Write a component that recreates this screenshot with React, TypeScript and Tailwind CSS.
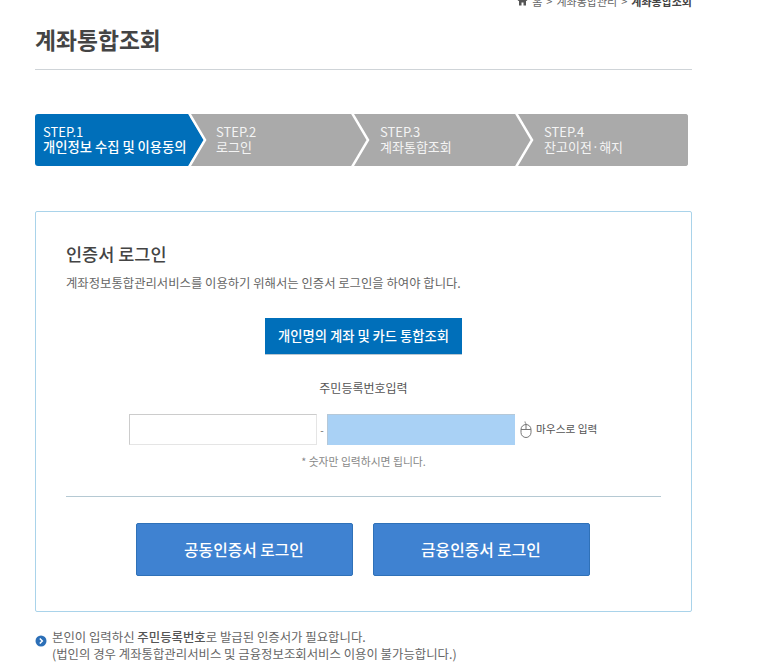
import React from "react";

function Step({ w, pl, title, sub, active }: { w: string; pl: string; title: string; sub: string; active?: boolean }) {
  return (
    <div className={`${w} ${pl} pb-[2px] flex flex-col justify-center text-[13px] leading-[15px] ${active ? "bg-[#006fba] text-white" : "bg-[#aaaaaa] text-[#f4f4f4]"}`}>
      <span>{title}</span>
      <span className={active ? "font-medium text-[13.3px] whitespace-nowrap" : "whitespace-nowrap"}>{sub}</span>
    </div>
  );
}

export default function App() {
  return (
    <div className="w-[765px] h-[663px] overflow-hidden bg-white pl-[35px] font-['Noto_Sans_CJK_KR','Liberation_Sans',sans-serif] text-[#555]">
      <div className="w-[657px]">
        <div className="flex justify-end items-center gap-[4px] -mt-[6px] h-[14px] text-[11px] leading-[14px] text-[#666]">
          <svg width="11" height="10" viewBox="0 0 10 10"><path d="M5 0.5 0 5h1.5v4.5h2.5V6.5h2v3h2.5V5H10z" fill="#555" /></svg>
          <span>홈</span>
          <span>&gt;</span>
          <span>계좌통합관리</span>
          <span>&gt;</span>
          <span className="font-bold text-[#444]">계좌통합조회</span>
        </div>
        <h1 className="mt-[17px] h-[44px] text-[22.8px] leading-[30px] font-bold text-[#444]">계좌통합조회</h1>
        <div className="h-px bg-[#cfd4d8]" />

        <div className="relative mt-[44px] w-[653px] h-[52px] flex rounded-[3px] overflow-hidden">
          <Step active w="w-[155px]" pl="pl-[8px]" title="STEP.1" sub="개인정보 수집 및 이용동의" />
          <div className="flex-1 flex bg-[#aaaaaa]">
            <Step w="w-[164px]" pl="pl-[26px]" title="STEP.2" sub="로그인" />
            <Step w="w-[164px]" pl="pl-[26px]" title="STEP.3" sub="계좌통합조회" />
            <Step w="w-[170px]" pl="pl-[26px]" title="STEP.4" sub="잔고이전·해지" />
          </div>
          <svg className="absolute left-0 top-0" width="653" height="52" viewBox="0 0 653 52">
            <path d="M153 0 L169 26 L153 52 Z" fill="#006fba" />
            <path d="M154 -1 L170 26 L154 53" fill="none" stroke="#fff" strokeWidth="2.5" />
            <path d="M317 -1 L333 26 L317 53" fill="none" stroke="#fff" strokeWidth="2.5" />
            <path d="M481 -1 L497 26 L481 53" fill="none" stroke="#fff" strokeWidth="2.5" />
          </svg>
        </div>

        <div className="mt-[45px] h-[401px] border border-[#a9d3ea] rounded-[2px] px-[30px] pt-[30px]">
          <h2 className="text-[17.5px] leading-[24px] font-medium text-[#444]">인증서 로그인</h2>
          <p className="mt-[8px] text-[12.35px] leading-[18px] text-[#666]">계좌정보통합관리서비스를 이용하기 위해서는 인증서 로그인을 하여야 합니다.</p>
          <div className="flex justify-center mt-[26px]">
            <button className="w-[197px] h-[37px] bg-[#006fba] text-white text-[13.3px] font-medium border-b border-[#b9c6d0]">개인명의 계좌 및 카드 통합조회</button>
          </div>
          <p className="mt-[24px] text-center text-[12px] leading-[18px] text-[#555]">주민등록번호입력</p>
          <div className="mt-[17px] flex items-center pl-[63px]">
            <div className="w-[188px] h-[31px] border border-[#cccccc] border-r-[#e5e5e5] border-b-[#e5e5e5] bg-white" />
            <span className="w-[10px] text-center text-[10px] text-[#666]">-</span>
            <div className="w-[188px] h-[31px] bg-[#a9d1f5] border-l border-t border-[#b5c8d8]" />
            <svg className="ml-[5px]" width="12" height="17" viewBox="0 0 12 17" fill="none" stroke="#777" strokeWidth="1">
              <rect x="1" y="3.5" width="10" height="13" rx="5" />
              <path d="M1 8.5h10M6 3.5v5M6 3.5C6 2 5 2 5 0.5" />
            </svg>
            <span className="ml-[4px] text-[10.7px] text-[#555] whitespace-nowrap">마우스로 입력</span>
          </div>
          <p className="mt-[9px] text-center text-[10.8px] leading-[14px] text-[#888]">* 숫자만 입력하시면 됩니다.</p>
          <div className="mt-[28px] h-px bg-[#b5c9d3]" />
          <div className="mt-[26px] flex justify-center gap-[20px] pr-[2px]">
            <button className="w-[217px] h-[53px] bg-[#3f82d1] border border-[#2f71b8] rounded-[2px] text-white text-[15.8px] font-medium">공동인증서 로그인</button>
            <button className="w-[217px] h-[53px] bg-[#3f82d1] border border-[#2f71b8] rounded-[2px] text-white text-[15.8px] font-medium">금융인증서 로그인</button>
          </div>
        </div>

        <div className="mt-[17px] flex text-[12.4px] leading-[17px] text-[#666]">
          <svg className="mt-[6px] mr-[5px] shrink-0" width="12" height="12" viewBox="0 0 12 12">
            <circle cx="6" cy="6" r="5.5" fill="#2c6fb7" />
            <path d="M4.8 3.5 7.3 6l-2.5 2.5" fill="none" stroke="#fff" strokeWidth="1.5" />
          </svg>
          <p>
            본인이 입력하신 <span className="font-medium text-[#555]">주민등록번호</span>로 발급된 인증서가 필요합니다.
            <br />
            (법인의 경우 계좌통합관리서비스 및 금융정보조회서비스 이용이 불가능합니다.)
          </p>
        </div>
      </div>
    </div>
  );
}
